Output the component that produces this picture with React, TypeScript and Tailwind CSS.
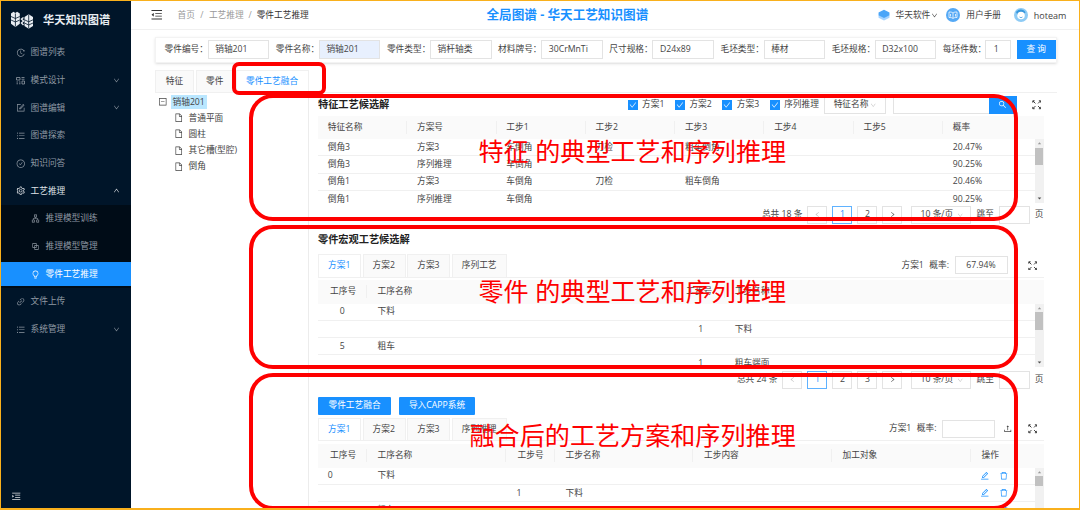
import React from "react";
import {
  AiOutlineApartment,
  AiOutlineBlock,
  AiOutlineBulb,
  AiOutlineCheck,
  AiOutlineCheckCircle,
  AiOutlineDelete,
  AiOutlineDown,
  AiOutlineEdit,
  AiOutlineFile,
  AiOutlineForm,
  AiOutlineHistory,
  AiOutlineLeft,
  AiOutlineLink,
  AiOutlineMenuFold,
  AiOutlineMenuUnfold,
  AiOutlineMinusSquare,
  AiOutlineRight,
  AiOutlineSearch,
  AiOutlineSetting,
  AiOutlineUnorderedList,
  AiOutlineUp,
  AiOutlineUpload,
} from "react-icons/ai";

const SchemaIcon = () => (
  <svg viewBox="0 0 18 18" fill="none" stroke="currentColor" strokeWidth="1.6" className="w-[9px] h-[9px]">
    <path d="M1 3h7v5H1zM1 12h3M6 12h3M1 15.5h3M6 15.5h3M11 3h6M11 6.5h6M12 10h5v6h-5z" />
  </svg>
);

const ExpandIcon = () => (
  <svg viewBox="0 0 18 18" fill="none" stroke="#333" strokeWidth="1.8" className="w-[9.5px] h-[9.5px]">
    <path d="M1.5 5v-3.5h3.5M13 1.5h3.5v3.5M16.5 13v3.5h-3.5M5 16.5h-3.5v-3.5M2 2l4.5 4.5M16 2l-4.5 4.5M2 16l4.5-4.5M16 16l-4.5-4.5" />
  </svg>
);

// two barrels joined by a bracket
const Logo = () => (
  <svg viewBox="0 0 24 18" className="w-6 h-[18px]">
    <path
      d="M1 2.5l2.5-1.7L5.3 2l1.8-1.2L9.8 2.5v10.3L5.4 16 1 12.8z M14.5 6l4.2-2.8L23 6v9l-4.3 2.8L14.5 15z"
      fill="#e8edf2"
    />
    <path
      d="M5.4 2.5v13M1 5.5l4.4 2 4.4-2M1 9l4.4 2 4.4-2M18.7 3.5v14M14.5 8.8l4.2 2 4.3-2M14.5 12l4.2 2 4.3-2"
      fill="none"
      stroke="#001529"
      strokeWidth=".8"
    />
    <path d="M13.5 6.5l-2 1.5 2 2-2 2 2 2" fill="none" stroke="#e8edf2" strokeWidth="1.4" />
  </svg>
);

const menus = [
  { name: "图谱列表", icon: <AiOutlineHistory /> },
  { name: "模式设计", icon: <SchemaIcon />, more: true },
  { name: "图谱编辑", icon: <AiOutlineForm />, more: true },
  { name: "图谱探索", icon: <AiOutlineUnorderedList /> },
  { name: "知识问答", icon: <AiOutlineCheckCircle /> },
];

const filters = [
  { label: "零件编号", value: "销轴201" },
  { label: "零件名称", value: "销轴201", filled: true },
  { label: "零件类型", value: "销杆轴类" },
  { label: "材料牌号", value: "30CrMnTi" },
  { label: "尺寸规格", value: "D24x89" },
  { label: "毛坯类型", value: "棒材" },
  { label: "毛坯规格", value: "D32x100" },
];

const featureCols = ["特征名称", "方案号", "工步1", "工步2", "工步3", "工步4", "工步5", "概率"];
const featureRows = [
  ["倒角3", "方案3", "车倒角", "刀检", "粗车倒角", "", "", "20.47%"],
  ["倒角3", "序列推理", "车倒角", "", "", "", "", "90.25%"],
  ["倒角1", "方案3", "车倒角", "刀检", "粗车倒角", "", "", "20.46%"],
  ["倒角1", "序列推理", "车倒角", "", "", "", "", "90.25%"],
];

const MenuItem = ({ name, icon, more }: any) => (
  <li className="flex items-center h-[27.7px] pl-[14.5px] pr-[11px] text-[#8f99a3]">
    <span className="w-[15px] text-[9.5px]">{icon}</span>
    <span className="flex-1">{name}</span>
    {more && <AiOutlineDown className="text-[7px]" />}
  </li>
);

const Sidebar = () => (
  <aside className="flex flex-col w-[130px] shrink-0 bg-[#001529]">
    <div className="flex items-center h-[37.7px] pl-[9px] gap-[9px] text-[11.2px] font-bold text-[#e8edf2]">
      <Logo />
      华天知识图谱
    </div>
    <ul>
      {menus.map((m) => (
        <MenuItem key={m.name} {...m} />
      ))}
      <li className="flex items-center h-[27.7px] pl-[14.5px] pr-[11px] text-[#dfe3e7]">
        <AiOutlineSetting className="w-[9.5px] mr-[5.5px] text-[9.5px]" />
        <span className="flex-1">工艺推理</span>
        <AiOutlineUp className="text-[7px]" />
      </li>
      <ul className="bg-[#000c17] text-[#8f99a3]">
        <li className="flex items-center h-[27.7px] pl-[29.5px]">
          <AiOutlineApartment className="mr-[6px] text-[9px]" />
          推理模型训练
        </li>
        <li className="flex items-center h-[27.7px] pl-[29.5px]">
          <AiOutlineBlock className="mr-[6px] text-[9px]" />
          推理模型管理
        </li>
        <li className="flex items-center h-[27.7px]">
          <span className="flex items-center w-full h-[23.5px] pl-[29.5px] bg-[#1890ff] text-white">
            <AiOutlineBulb className="mr-[6px] text-[9px]" />
            零件工艺推理
          </span>
        </li>
      </ul>
      <MenuItem name="文件上传" icon={<AiOutlineLink />} />
      <MenuItem name="系统管理" icon={<AiOutlineUnorderedList />} more />
    </ul>
    <div className="flex items-center mt-auto h-[24px] pl-[9.5px] text-[10.5px] text-[#e0e3e6]">
      <AiOutlineMenuUnfold />
    </div>
  </aside>
);

const Header = () => (
  <header className="flex items-center h-[29px] pl-[19px] border-b border-[#f0f0f0] shrink-0 text-[#444]">
    <AiOutlineMenuFold className="text-[13.5px] text-[#333]" />
    <div className="flex w-[323px] pl-[14px] text-[#999]">
      <span>首页</span>
      <span className="w-[14px] text-center">/</span>
      <span>工艺推理</span>
      <span className="w-[13px] text-center">/</span>
      <span className="text-[#333]">零件工艺推理</span>
    </div>
    <h1 className="w-[391px] text-[12.6px] font-bold text-[#1890ff]">全局图谱 - 华天工艺知识图谱</h1>
    <svg viewBox="0 0 22 22" className="w-[12px] h-[12px] mr-[6px]">
      <path d="M1 11l10-4 10 4v5l-10 5-10-5z" fill="#a5d3ff" />
      <path d="M1 6.5l10-5 10 5v5l-10 5-10-5z" fill="#4aa5f8" />
    </svg>
    <span>华天软件</span>
    <AiOutlineDown className="ml-[1px] mr-[8px] text-[7px]" />
    <svg viewBox="0 0 28 28" className="w-[14px] h-[14px] mr-[6px]" fill="none">
      <circle cx="14" cy="14" r="14" fill="#55a9f5" />
      <path d="M14 10c-2-2-5-2-8-2v11c3 0 6 0 8 2 2-2 5-2 8-2V8c-3 0-6 0-8 2zv11M9 12v5M19 12v5" stroke="#fff" strokeWidth="1.5" />
    </svg>
    <span className="w-[47.5px]">用户手册</span>
    <svg viewBox="0 0 28 28" className="w-[14px] h-[14px] mr-[6px]">
      <circle cx="14" cy="14" r="14" fill="#8ecbf5" />
      <path d="M4 8C10 0 20 2 23 9l-4 3-12 2z" fill="#3797dd" />
      <circle cx="14" cy="15" r="7.5" fill="#fff" />
      <path d="M11 18q3 3 6 0" fill="none" stroke="#3797dd" strokeWidth="1.5" />
    </svg>
    <span className="text-[9px]">hoteam</span>
  </header>
);

const FilterBar = () => (
  <div className="flex items-center mt-[6.5px] ml-[24px] w-[902px] h-[26px] pl-[8.5px] shrink-0 border border-[#f3f3f3] shadow-sm">
    {filters.map((f) => (
      <div key={f.label} className="flex items-center w-[111.2px]">
        <label className="w-[43.2px]">{f.label}：</label>
        <span
          className={
            "flex items-center w-[61.5px] h-[18.5px] pl-[6.5px] border border-[#e3e3e3] " +
            (f.filled ? "bg-[#e8f0fe]" : "bg-white")
          }
        >
          {f.value}
        </span>
      </div>
    ))}
    <label className="w-[42px]">每坯件数：</label>
    <span className="flex items-center w-[26px] h-[18.5px] pl-[8px] border border-[#e3e3e3]">1</span>
    <button className="ml-auto w-[39.5px] h-[18.5px] bg-[#1890ff] text-white">查 询</button>
  </div>
);

const Tree = () => (
  <div className="w-[154px] pt-[1px] ml-[24px] border-r border-[#ececec]">
    <div className="flex items-center h-[16.1px] pl-[3px]">
      <AiOutlineMinusSquare className="text-[9.5px] mr-[3px]" />
      <span className="flex items-center h-[13.5px] px-[2px] bg-[#bae7ff]">销轴201</span>
    </div>
    {["普通平面", "圆柱", "其它槽(型腔)", "倒角"].map((n) => (
      <div key={n} className="flex items-center h-[16.1px] pl-[18.5px]">
        <AiOutlineFile className="text-[9.5px] mr-[5.5px]" />
        {n}
      </div>
    ))}
  </div>
);

const Scrollbar = ({ thumb, end = true }: { thumb: string; end?: boolean }) => (
  <div className="flex flex-col items-center w-[9px] bg-[#f1f1f1] shrink-0">
    <svg viewBox="0 0 9 9" className="w-[9px] h-[8.5px] shrink-0">
      <path d="M2.7 5.5h3.6L4.5 3.5z" fill="#999" />
    </svg>
    <div className={"w-[7.5px] bg-[#c1c1c1] " + thumb}></div>
    {end && (
      <svg viewBox="0 0 9 9" className="w-[9px] h-[9px] mt-auto shrink-0">
        <path d="M2.7 3.5h3.6L4.5 5.5z" fill="#505050" />
      </svg>
    )}
  </div>
);

const Pagination = ({ total, pages }: { total: number; pages: number[] }) => (
  <div className="flex items-center justify-end h-[18.5px] shrink-0">
    <span className="mr-[5px]">总共 {total} 条</span>
    <span className="flex items-center justify-center w-[20px] h-[18.5px] mr-[5px] border border-[#e3e3e3] text-[#bbb]">
      <AiOutlineLeft className="text-[7px]" />
    </span>
    {pages.map((p) => (
      <span
        key={p}
        className={
          "flex items-center justify-center w-[20px] h-[18.5px] mr-[5px] border " +
          (p === 1 ? "border-[#5fb2ff] text-[#1890ff]" : "border-[#e3e3e3]")
        }
      >
        {p}
      </span>
    ))}
    <span className="flex items-center justify-center w-[20px] h-[18.5px] mr-[9px] border border-[#e3e3e3]">
      <AiOutlineRight className="text-[7px]" />
    </span>
    <span className="flex items-center justify-between w-[60px] h-[18.5px] pl-[8px] pr-[7px] mr-[5px] border border-[#e3e3e3]">
      10 条/页
      <AiOutlineDown className="text-[6.5px] text-[#bbb]" />
    </span>
    跳至
    <span className="w-[31px] h-[18.5px] mx-[5px] border border-[#e3e3e3]"></span>页
  </div>
);

const SchemeTabs = ({ last }: { last: string }) => {
  const [open, setOpen] = React.useState(0);
  return (
    <div className="flex gap-[1.3px] self-stretch">
      {["方案1", "方案2", "方案3", last].map((t, i) => (
        <button
          key={t}
          onClick={() => setOpen(i)}
          className={
            "flex items-center px-[9px] border border-b-0 border-[#f0f0f0] " +
            (i === 3 ? "w-[55px] " : "w-[43.3px] ") +
            (open === i ? "bg-white text-[#1890ff]" : "bg-[#fafafa]")
          }
        >
          {t}
        </button>
      ))}
    </div>
  );
};

const Th = ({ w, pad, last, children }: any) => (
  <div className={"flex items-center h-full " + w}>
    <span className={"flex-1 " + (pad || "pl-[9.7px]")}>{children}</span>
    {!last && <i className="w-px h-[13px] bg-[#f0f0f0]"></i>}
  </div>
);

const rowCls = "flex items-center h-[17.3px] border-b border-[#f0f0f0]";

const FeatureSection = () => (
  <section>
    <div className="flex items-center h-[22.5px] pt-[1px]">
      <h2 className="w-[309.5px] text-[10.2px] font-bold text-[#222] relative -top-px">特征工艺候选解</h2>
      {["方案1", "方案2", "方案3", "序列推理"].map((c, i) => (
        <label key={c} className={"flex items-center " + (i === 3 ? "w-[54.5px]" : "w-[47.4px]")}>
          <span className="flex items-center justify-center w-[10px] h-[9.5px] mr-[4.5px] bg-[#1890ff] text-white">
            <AiOutlineCheck className="text-[8px]" />
          </span>
          {c}
        </label>
      ))}
      <span className="flex items-center justify-between w-[62px] h-[18.5px] px-[8.5px] mr-[6.5px] border border-[#e3e3e3] shrink-0">
        特征名称
        <AiOutlineDown className="text-[6.5px] text-[#bbb]" />
      </span>
      <span className="w-[96px] h-[18.5px] border border-r-0 border-[#e3e3e3]"></span>
      <button className="flex items-center justify-center w-[28px] h-[18.5px] mr-[15px] bg-[#1890ff] text-white">
        <AiOutlineSearch className="text-[9px]" />
      </button>
      <ExpandIcon />
    </div>
    <div className="flex items-center h-[23.5px] bg-[#fafafa]">
      {featureCols.map((c, i) => (
        <Th key={c} w="w-[89.3px]" last={i === 7}>
          {c}
        </Th>
      ))}
    </div>
    <div className="flex h-[63.5px] overflow-hidden">
      <div className="flex-1">
        {featureRows.map((r, i) => (
          <div key={i} className={rowCls}>
            {r.map((v, j) => (
              <span key={j} className="w-[89.3px] pl-[9.7px]">
                {v}
              </span>
            ))}
          </div>
        ))}
      </div>
      <Scrollbar thumb="h-[17px]" />
    </div>
    <div className="pt-[3px]">
      <Pagination total={18} pages={[1, 2]} />
    </div>
  </section>
);

const Probability = ({ value, upload }: { value?: string; upload?: boolean }) => (
  <div className="flex items-center ml-auto pr-[6.5px]">
    <span className="mr-[5.5px]">方案1</span>
    <span className="mr-[5.5px]">概率:</span>
    <span className="flex items-center justify-center w-[53px] h-[18px] border border-[#e3e3e3]">{value}</span>
    {upload && <AiOutlineUpload className="ml-[8px] text-[9.5px]" />}
    <span className={upload ? "ml-[15px]" : "ml-[20px]"}>
      <ExpandIcon />
    </span>
  </div>
);

const MacroSection = () => (
  <section>
    <h2 className="flex items-center h-[30px] text-[10.2px] font-bold text-[#222]">零件宏观工艺候选解</h2>
    <div className="flex items-center h-[23.5px] border-b border-[#f0f0f0]">
      <SchemeTabs last="序列工艺" />
      <Probability value="67.94%" />
    </div>
    <div className="flex items-center h-[23.5px] mt-[2.5px] bg-[#fafafa]">
      <Th w="w-[48.5px]" pad="pl-[12px]">工序号</Th>
      <Th w="w-[310px]" pad="pl-[11px]">工序名称</Th>
      <Th w="w-[48.5px]">工步号</Th>
      <Th w="w-[318px]" last>工步名称</Th>
    </div>
    <div className="flex h-[63px] overflow-hidden">
      <div className="flex-1">
        {[
          ["0", "下料", "", ""],
          ["", "", "1", "下料"],
          ["5", "粗车", "", ""],
          ["", "", "1", "粗车端面"],
        ].map((r, i) => (
          <div key={i} className={rowCls}>
            <span className="w-[48.5px] text-center">{r[0]}</span>
            <span className="w-[310px] pl-[11px]">{r[1]}</span>
            <span className="w-[48.5px] text-center">{r[2]}</span>
            <span className="pl-[9.7px]">{r[3]}</span>
          </div>
        ))}
      </div>
      <Scrollbar thumb="h-[17.5px]" />
    </div>
    <div className="pt-[4px]">
      <Pagination total={24} pages={[1, 2, 3]} />
    </div>
  </section>
);

const FusionSection = () => (
  <section>
    <div className="flex gap-[8px] pt-[7.5px] text-white">
      <button className="w-[73px] h-[18.5px] bg-[#1890ff] rounded-[1px]">零件工艺融合</button>
      <button className="w-[76px] h-[18.5px] bg-[#1890ff] rounded-[1px]">导入CAPP系统</button>
    </div>
    <div className="flex items-center h-[23.5px] mt-[2.5px] border-b border-[#f0f0f0]">
      <SchemeTabs last="序列推理" />
      <Probability upload />
    </div>
    <div className="flex items-center h-[23.5px] mt-[3px] bg-[#fafafa]">
      <Th w="w-[48.5px]" pad="pl-[12px]">工序号</Th>
      <Th w="w-[139px]" pad="pl-[11px]">工序名称</Th>
      <Th w="w-[49px]" pad="pl-[12px]">工步号</Th>
      <Th w="w-[138.5px]" pad="pl-[11px]">工步名称</Th>
      <Th w="w-[138.5px]" pad="pl-[11px]">工步内容</Th>
      <Th w="w-[139px]" pad="pl-[11px]">加工对象</Th>
      <Th w="w-[60px]" pad="pl-[11px]" last>操作</Th>
    </div>
    <div className="flex h-[42px] overflow-hidden">
      <div className="flex-1">
        {[
          ["0", "下料", "", ""],
          ["", "", "1", "下料"],
          ["5", "粗车", "", ""],
        ].map((r, i) => (
          <div key={i} className={rowCls}>
            <span className="w-[48.5px] pl-[9.7px]">{r[0]}</span>
            <span className="w-[139px] pl-[11px]">{r[1]}</span>
            <span className="w-[49px] pl-[11px]">{r[2]}</span>
            <span className="flex-1 pl-[11px]">{r[3]}</span>
            <span className="flex gap-[9.5px] w-[54.5px] text-[9.5px] text-[#1890ff]">
              <AiOutlineEdit />
              <AiOutlineDelete />
            </span>
          </div>
        ))}
      </div>
      <Scrollbar thumb="h-[10px]" end={false} />
    </div>
  </section>
);

// red frames and captions that lie over the page
const Notes = () => (
  <div className="text-[25.1px] leading-[30px] text-[#fe0000] whitespace-nowrap">
    <div className="absolute left-[230.5px] top-[61px] w-[94.5px] h-[32.5px] border-4 border-[#fe0000] rounded-[7px]"></div>
    <div className="absolute left-[248px] top-[93px] w-[768.5px] h-[126.5px] border-4 border-[#fe0000] rounded-[24px]"></div>
    <div className="absolute left-[248px] top-[223.5px] w-[768.5px] h-[144px] border-4 border-[#fe0000] rounded-[24px]"></div>
    <div className="absolute left-[248px] top-[371.5px] w-[768.5px] h-[137px] border-4 border-[#fe0000] rounded-[24px]"></div>
    <p className="absolute left-[477.5px] top-[135px]">特征 的典型工艺和序列推理</p>
    <p className="absolute left-[477.5px] top-[274.5px]">零件 的典型工艺和序列推理</p>
    <p className="absolute left-[468.5px] top-[419px]">融合后的工艺方案和序列推理</p>
  </div>
);

const App = () => {
  return (
    <div className="relative flex w-[1080px] h-[510px] overflow-hidden border border-b-2 border-[#f9b01c] bg-white text-[8.7px] leading-none text-[#444] font-['Open_Sans','Noto_Sans_CJK_SC',sans-serif]">
      <Sidebar />
      <main className="flex flex-col flex-1 min-w-0 whitespace-nowrap">
        <Header />
        <FilterBar />
        <div className="flex gap-[1.5px] ml-[24px] mt-[7px] w-[902px] h-[23.5px] shrink-0 border-b border-[#f0f0f0]">
          <button className="w-[39px] border border-b-0 border-[#f0f0f0] bg-[#fafafa]">特征</button>
          <button className="w-[38.5px] border border-b-0 border-[#f0f0f0] bg-[#fafafa]">零件</button>
          <button className="w-[73px] border border-b-0 border-[#f0f0f0] bg-white text-[#1890ff]">零件工艺融合</button>
        </div>
        <div className="flex flex-1 min-h-0">
          <Tree />
          <div className="w-[725.5px] ml-[9px]">
            <FeatureSection />
            <MacroSection />
            <FusionSection />
          </div>
        </div>
      </main>
      <Notes />
    </div>
  );
};

export default App;
